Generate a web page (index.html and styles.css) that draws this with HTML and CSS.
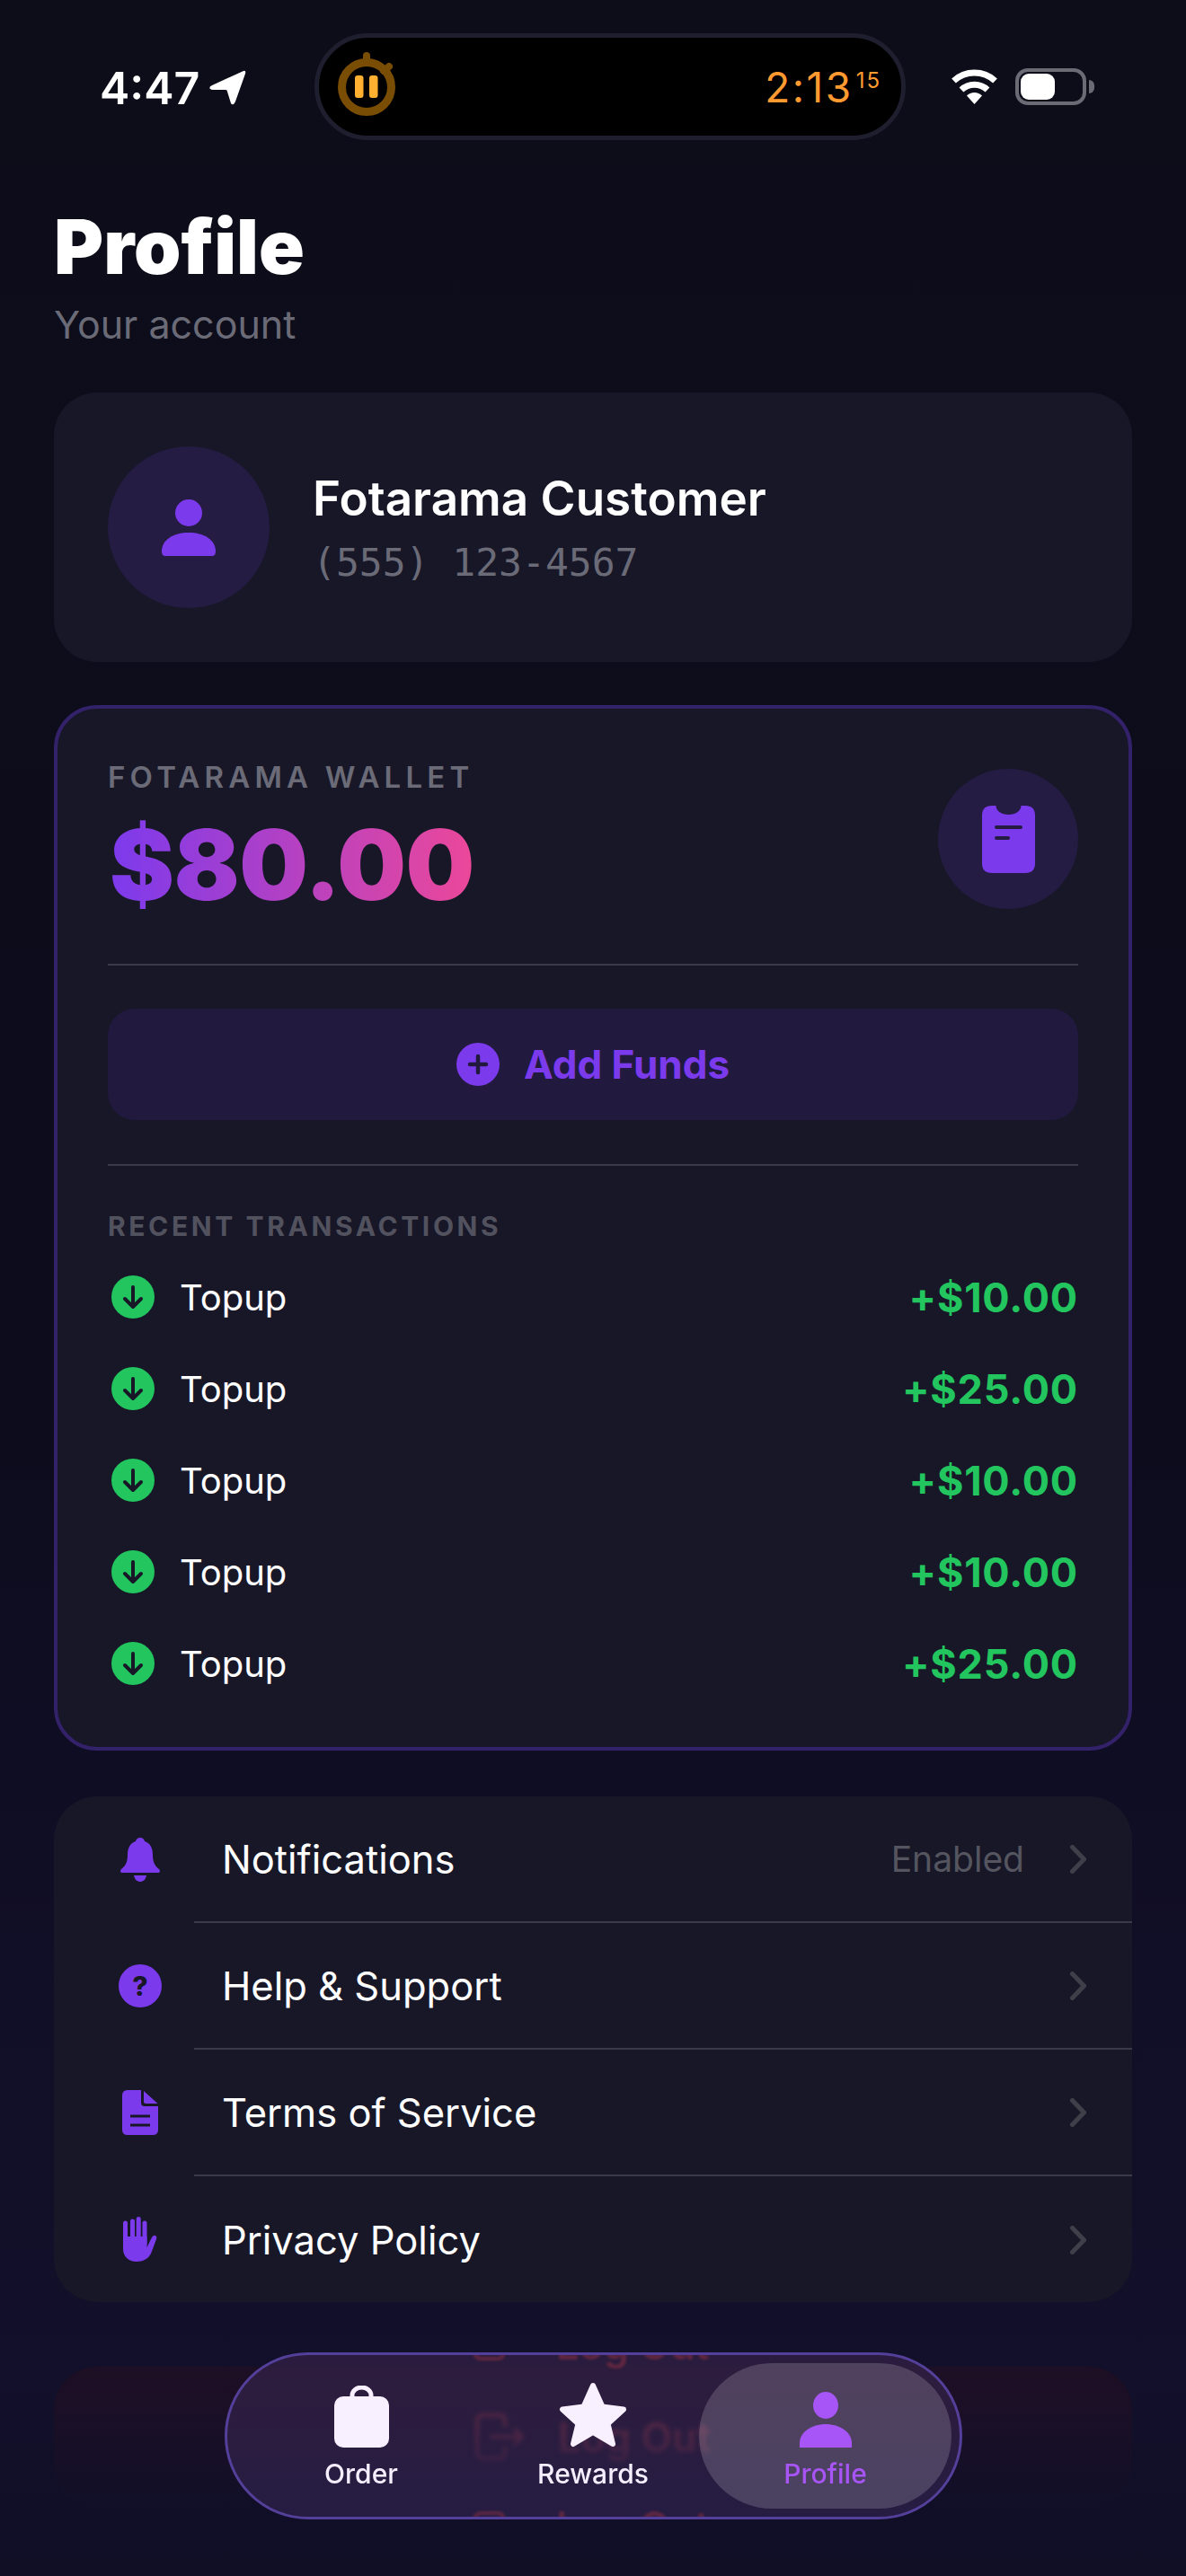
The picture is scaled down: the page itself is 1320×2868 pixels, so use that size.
FILE: index.html
```html
<!DOCTYPE html>
<html lang="en">
<head>
    <meta charset="UTF-8">
    <meta name="viewport" content="width=device-width, initial-scale=1.0">
    <title>Profile</title>
    <link rel="stylesheet" href="styles.css">
</head>
<body>
    <div class="status-bar">
        <div class="status-left">
            <span class="clock">4:47</span>
            <svg class="arrow-icon" viewBox="0 0 41 39"><path d="M38 1 L3 17 Q-1 19 1 21 Q2 22 4 22 L18 22 Q20 22 20 24 L24 37 Q25 39 27 38 Q28 37 29 35 L40 4 Q41 0 38 1Z"/></svg>
        </div>
        <div class="island">
            <svg class="stopwatch" viewBox="0 0 72 82">
                <circle cx="32" cy="41" r="27.5" fill="none" stroke="#7a4d05" stroke-width="9"/>
                <path d="M32 6 V12 M57 18 L51 23" stroke="#7a4d05" stroke-width="8" stroke-linecap="round"/>
                <rect x="19" y="28" width="9.5" height="25" rx="3" fill="#ffb030"/>
                <rect x="35" y="28" width="9.5" height="25" rx="3" fill="#ffb030"/>
            </svg>
            <span class="timer">2:13<sup>15</sup></span>
        </div>
        <div class="status-right">
            <svg class="wifi" viewBox="0 0 53 39">
                <path d="M3.5 13 A 34 34 0 0 1 49.5 13 M12 23 A 21 21 0 0 1 41 23" fill="none" stroke="#fff" stroke-width="7"/>
                <path d="M26.5 39 L18 29.5 A 12 12 0 0 1 35 29.5 Z" fill="#fff"/>
            </svg>
            <div class="battery"><div class="battery-fill"></div></div>
        </div>
    </div>

    <div class="page-head">
        <h1>Profile</h1>
        <p>Your account</p>
    </div>

    <div class="card user-card">
        <div class="avatar">
            <svg class="person" viewBox="0 0 60 63">
                <circle cx="30" cy="15" r="15"/>
                <path d="M0 58 C0 45 13 37 30 37 C47 37 60 45 60 58 Q60 63 56 63 H4 Q0 63 0 58Z"/>
            </svg>
        </div>
        <div class="user-info">
            <div class="user-name">Fotarama Customer</div>
            <div class="user-phone">(555) 123-4567</div>
        </div>
    </div>

    <div class="card wallet">
        <div class="wallet-top">
            <div>
                <div class="wallet-label">FOTARAMA WALLET</div>
                <div class="wallet-amount">$80.00</div>
            </div>
            <div class="wallet-icon">
                <svg viewBox="0 0 59 75">
                    <path d="M11 0 H15.5 C15.5 6 22 10 29.5 10 C37 10 43.5 6 43.5 0 H48 Q59 0 59 11 V64 Q59 75 48 75 H11 Q0 75 0 64 V11 Q0 0 11 0Z" fill="#7c3aed"/>
                    <rect x="14" y="22" width="31" height="4" rx="2" fill="#241c42"/>
                    <rect x="14" y="34" width="17" height="4" rx="2" fill="#241c42"/>
                </svg>
            </div>
        </div>
        <div class="add-funds">
            <svg class="plus" viewBox="0 0 48 48">
                <circle cx="24" cy="24" r="24" fill="#7c3aed"/>
                <path d="M24 15 V33 M15 24 H33" stroke="#211a3e" stroke-width="4.5" stroke-linecap="round"/>
            </svg>
            <span>Add Funds</span>
        </div>
        <div class="tx-title">RECENT TRANSACTIONS</div>
        <div class="tx-list">
            <div class="tx-row">
                <svg class="tx-icon" viewBox="0 0 48 48"><circle cx="24" cy="24" r="24" fill="#22c55e"/><path d="M24 13 V34 M15 26 L24 35 L33 26" fill="none" stroke="#171728" stroke-width="4" stroke-linecap="round" stroke-linejoin="round"/></svg>
                <span class="tx-name">Topup</span>
                <span class="tx-amount">+$10.00</span>
            </div>
            <div class="tx-row">
                <svg class="tx-icon" viewBox="0 0 48 48"><circle cx="24" cy="24" r="24" fill="#22c55e"/><path d="M24 13 V34 M15 26 L24 35 L33 26" fill="none" stroke="#171728" stroke-width="4" stroke-linecap="round" stroke-linejoin="round"/></svg>
                <span class="tx-name">Topup</span>
                <span class="tx-amount">+$25.00</span>
            </div>
            <div class="tx-row">
                <svg class="tx-icon" viewBox="0 0 48 48"><circle cx="24" cy="24" r="24" fill="#22c55e"/><path d="M24 13 V34 M15 26 L24 35 L33 26" fill="none" stroke="#171728" stroke-width="4" stroke-linecap="round" stroke-linejoin="round"/></svg>
                <span class="tx-name">Topup</span>
                <span class="tx-amount">+$10.00</span>
            </div>
            <div class="tx-row">
                <svg class="tx-icon" viewBox="0 0 48 48"><circle cx="24" cy="24" r="24" fill="#22c55e"/><path d="M24 13 V34 M15 26 L24 35 L33 26" fill="none" stroke="#171728" stroke-width="4" stroke-linecap="round" stroke-linejoin="round"/></svg>
                <span class="tx-name">Topup</span>
                <span class="tx-amount">+$10.00</span>
            </div>
            <div class="tx-row">
                <svg class="tx-icon" viewBox="0 0 48 48"><circle cx="24" cy="24" r="24" fill="#22c55e"/><path d="M24 13 V34 M15 26 L24 35 L33 26" fill="none" stroke="#171728" stroke-width="4" stroke-linecap="round" stroke-linejoin="round"/></svg>
                <span class="tx-name">Topup</span>
                <span class="tx-amount">+$25.00</span>
            </div>
        </div>
    </div>

    <div class="card menu">
        <div class="menu-row">
            <div class="menu-icon">
                <svg class="bell" viewBox="0 0 44 49" fill="#7c3aed">
                    <path d="M22 0 C25 0 26.5 2 27 4 C33.5 6 36 12 36 19 C36 27 38 31 43 35 Q45 37 43 39 H1 Q-1 37 1 35 C6 31 8 27 8 19 C8 12 10.5 6 17 4 C17.5 2 19 0 22 0Z"/>
                    <path d="M15 42 H29 C28 47 25 49 22 49 C19 49 16 47 15 42Z"/>
                </svg>
            </div>
            <div class="menu-body">
                <span class="menu-text">Notifications</span>
                <span class="menu-value">Enabled</span>
                <svg class="chevron" viewBox="0 0 18 32"><path d="M2.5 2.5 L15.5 16 L2.5 29.5"/></svg>
            </div>
        </div>
        <div class="menu-row">
            <div class="menu-icon"><span class="help-icon">?</span></div>
            <div class="menu-body">
                <span class="menu-text">Help &amp; Support</span>
                <svg class="chevron" viewBox="0 0 18 32"><path d="M2.5 2.5 L15.5 16 L2.5 29.5"/></svg>
            </div>
        </div>
        <div class="menu-row">
            <div class="menu-icon">
                <svg class="doc" viewBox="0 0 40 50">
                    <path d="M6 0 H21 V14 Q21 18 25 18 H40 V44 Q40 50 34 50 H6 Q0 50 0 44 V6 Q0 0 6 0Z" fill="#7c3aed"/>
                    <path d="M24 1 L39.5 15 H26 Q24 15 24 13Z" fill="#7c3aed"/>
                    <path d="M9 29 H31 M9 39 H31" stroke="#171728" stroke-width="3"/>
                </svg>
            </div>
            <div class="menu-body">
                <span class="menu-text">Terms of Service</span>
                <svg class="chevron" viewBox="0 0 18 32"><path d="M2.5 2.5 L15.5 16 L2.5 29.5"/></svg>
            </div>
        </div>
        <div class="menu-row last">
            <div class="menu-icon">
                <svg class="hand" viewBox="0 0 38 50">
                    <path d="M0 22 H26.5 V34 L32 23 Q34 20 36 21 Q38 22 37 25 L31 41 C28 47 22 50 15 50 C6 50 0 44 0 36Z" fill="#7c3aed"/>
                    <path d="M2.5 30 V7 M10.5 30 V5 M17.2 30 V2.5 M24 30 V7" stroke="#7c3aed" stroke-width="5" stroke-linecap="round"/>
                </svg>
            </div>
            <div class="menu-body">
                <span class="menu-text">Privacy Policy</span>
                <svg class="chevron" viewBox="0 0 18 32"><path d="M2.5 2.5 L15.5 16 L2.5 29.5"/></svg>
            </div>
        </div>
    </div>

    <div class="card logout">
        <svg class="logout-icon" viewBox="0 0 54 52"><path d="M33 14 V8 Q33 2 27 2 H9 Q2 2 2 8 V44 Q2 50 9 50 H27 Q33 50 33 44 V38 M18 26 H52 M44 18 L52 26 L44 34"/></svg>
        <span>Log Out</span>
    </div>

    <div class="bottom-fade"></div>

    <div class="tab-bar">
        <div class="echo echo-top">
            <svg class="logout-icon" viewBox="0 0 54 52"><path d="M33 14 V8 Q33 2 27 2 H9 Q2 2 2 8 V44 Q2 50 9 50 H27 Q33 50 33 44 V38 M18 26 H52 M44 18 L52 26 L44 34"/></svg>
        </div>
        <div class="echo echo-bottom">
            <svg class="logout-icon" viewBox="0 0 54 52"><path d="M33 14 V8 Q33 2 27 2 H9 Q2 2 2 8 V44 Q2 50 9 50 H27 Q33 50 33 44 V38 M18 26 H52 M44 18 L52 26 L44 34"/></svg>
        </div>
        <div class="tab">
            <div class="tab-icon">
                <svg class="bag" viewBox="0 0 61 69">
                    <path d="M20 14 V11 A10.5 9 0 0 1 41 11 V14" fill="none" stroke="#f8f0ff" stroke-width="5"/>
                    <rect y="12" width="61" height="57" rx="10" fill="#f8f0ff"/>
                </svg>
            </div>
            <span>Order</span>
        </div>
        <div class="tab">
            <div class="tab-icon">
                <svg class="star" viewBox="0 0 76 73"><polygon points="38,4 48.5,27.5 72,30.5 54.5,46.5 60,69 38,56 16,69 21.5,46.5 4,30.5 27.5,27.5"/></svg>
            </div>
            <span>Rewards</span>
        </div>
        <div class="tab active">
            <div class="tab-icon">
                <svg class="tab-person" viewBox="0 0 58 62">
                    <ellipse cx="29" cy="15" rx="14" ry="15"/>
                    <path d="M0 62 V57 C0 45 13 36 29 36 C45 36 58 45 58 57 V62Z"/>
                </svg>
            </div>
            <span>Profile</span>
        </div>
    </div>
</body>
</html>
```

FILE: styles.css
```css
* {
    box-sizing: border-box;
}
html, body {
    margin: 0;
    height: 2868px;
    overflow: hidden;
}
body {
    position: relative;
    width: 1320px;
    font-family: 'Inter', sans-serif;
    color: #fff;
    background: linear-gradient(180deg, #0d0d1a 0, #0c0c1c 1500px, #110e27 2200px, #12102a 2650px, #100f26 2868px);
}

/* status bar */
.status-bar {
    display: grid;
    grid-template-columns: 350px 658px 1fr;
    padding-top: 37px;
    height: 156px;
}
.status-left {
    display: flex;
    align-items: center;
    padding: 2px 0 0 111px;
    gap: 11px;
}
.clock {
    font-size: 50px;
    font-weight: 600;
}
.arrow-icon {
    width: 41px;
    height: 39px;
    fill: #fff;
}
.island {
    display: flex;
    align-items: center;
    justify-content: space-between;
    background: #000;
    border: 5px solid #1e1e2e;
    border-radius: 60px;
    padding: 0 22px 0 21px;
}
.stopwatch {
    width: 72px;
    height: 82px;
}
.timer {
    color: #ff9a30;
    font-size: 46px;
    letter-spacing: 2.5px;
    line-height: 1;
}
.timer sup {
    font-size: 24px;
    letter-spacing: 2px;
    line-height: 1;
    vertical-align: 16px;
    margin-left: 3px;
}
.status-right {
    display: flex;
    align-items: center;
    padding-left: 50px;
    gap: 19px;
}
.wifi {
    width: 53px;
    height: 39px;
}
.battery {
    position: relative;
    width: 79px;
    height: 41px;
    border: 4px solid #6b6b76;
    border-radius: 14px;
    padding: 2px;
}
.battery-fill {
    width: 38px;
    height: 100%;
    background: #fff;
    border-radius: 9px;
}
.battery::after {
    content: "";
    position: absolute;
    right: -13px;
    top: 9px;
    width: 6px;
    height: 15px;
    background: #6b6b76;
    border-radius: 0 6px 6px 0;
}

/* heading */
.page-head {
    padding: 0 60px;
    margin-top: 69px;
}
.page-head h1 {
    margin: 0;
    font-size: 84px;
    font-weight: 900;
    line-height: 100px;
}
.page-head p {
    margin: 9px 0 0;
    font-size: 43px;
    line-height: 54px;
    color: #6b6b78;
}

.card {
    margin: 0 60px;
    background: #171728;
    border-radius: 48px;
}

/* user */
.user-card {
    display: flex;
    align-items: center;
    gap: 48px;
    height: 300px;
    margin-top: 49px;
    padding: 0 60px;
}
.avatar {
    display: flex;
    align-items: center;
    justify-content: center;
    width: 180px;
    height: 180px;
    border-radius: 50%;
    background: #241c42;
}
.person {
    width: 60px;
    height: 63px;
    fill: #7c3aed;
}
.user-info {
    padding-top: 2px;
}
.user-name {
    font-size: 53px;
    font-weight: 600;
    line-height: 60px;
}
.user-phone {
    font-family: 'DejaVu Sans Mono', monospace;
    font-size: 43px;
    line-height: 50px;
    margin-top: 16px;
    color: #6b6b78;
}

/* wallet */
.wallet {
    height: 1164px;
    margin-top: 48px;
    padding: 56px 56px 0;
    border: 4px solid #33216a;
}
.wallet-top {
    display: flex;
    align-items: center;
    justify-content: space-between;
    height: 230px;
    padding-bottom: 50px;
    border-bottom: 2px solid #3a3a48;
}
.wallet-label {
    font-size: 33px;
    font-weight: 600;
    letter-spacing: 5.2px;
    line-height: 40px;
    color: #6b6b78;
}
.wallet-amount {
    display: inline-block;
    margin: 18px 0 0 2px;
    font-size: 108px;
    font-weight: 900;
    letter-spacing: -0.5px;
    line-height: 120px;
    background: linear-gradient(90deg, #7c3aed, #ec4899);
    -webkit-background-clip: text;
    background-clip: text;
    color: transparent;
}
.wallet-icon {
    display: flex;
    align-items: center;
    justify-content: center;
    width: 156px;
    height: 156px;
    border-radius: 50%;
    background: #241c42;
}
.wallet-icon svg {
    width: 59px;
    height: 75px;
}
.add-funds {
    display: flex;
    align-items: center;
    justify-content: center;
    gap: 27px;
    height: 124px;
    margin-top: 48px;
    background: #211a3e;
    border-radius: 30px;
    color: #7c3aed;
    font-size: 44px;
    font-weight: 700;
}
.plus {
    width: 48px;
    height: 48px;
}
.tx-title {
    margin-top: 49px;
    padding-top: 49px;
    border-top: 2px solid #3a3a48;
    font-size: 30px;
    font-weight: 700;
    letter-spacing: 3.6px;
    line-height: 36px;
    color: #52525f;
}
.tx-list {
    margin-top: 10px;
}
.tx-row {
    display: flex;
    align-items: center;
    height: 102px;
}
.tx-icon {
    width: 48px;
    height: 48px;
    margin-left: 4px;
    margin-right: 28px;
}
.tx-name {
    flex: 1;
    font-size: 40px;
}
.tx-amount {
    font-size: 45px;
    font-weight: 700;
    letter-spacing: 0.8px;
    color: #22c55e;
}

/* menu */
.menu {
    margin-top: 51px;
    height: 563px;
    overflow: hidden;
}
.menu-row {
    display: flex;
    height: 141px;
}
.menu-icon {
    display: flex;
    align-items: center;
    justify-content: center;
    flex: none;
    width: 156px;
    height: 140px;
    padding-left: 36px;
}
.menu-body {
    flex: 1;
    display: flex;
    align-items: center;
    border-bottom: 2px solid #3a3a48;
    padding: 0 51px 0 31px;
}
.last .menu-body {
    border-bottom: 0;
}
.menu-text {
    flex: 1;
    font-size: 43.5px;
}
.menu-value {
    font-size: 39px;
    color: #55555f;
    margin-right: 51px;
}
.chevron {
    width: 18px;
    height: 32px;
    fill: none;
    stroke: #3f3f4a;
    stroke-width: 5;
    stroke-linecap: round;
    stroke-linejoin: round;
}
.bell {
    width: 44px;
    height: 49px;
}
.help-icon {
    display: flex;
    align-items: center;
    justify-content: center;
    width: 48px;
    height: 48px;
    border-radius: 50%;
    background: #7c3aed;
    color: #171728;
    font-size: 30px;
    font-weight: 800;
}
.doc {
    width: 40px;
    height: 50px;
}
.hand {
    width: 38px;
    height: 50px;
}

/* log out, mostly under the tab bar */
.logout {
    display: flex;
    align-items: center;
    justify-content: center;
    gap: 38px;
    height: 156px;
    margin-top: 72px;
    background: #1e0f24;
    color: #ef4444;
    font-size: 45px;
    font-weight: 600;
}
.logout-icon {
    width: 54px;
    height: 52px;
    fill: none;
    stroke: #ef4444;
    stroke-width: 4;
    stroke-linecap: round;
    stroke-linejoin: round;
}
.bottom-fade {
    position: absolute;
    left: 0;
    right: 0;
    top: 2620px;
    bottom: 0;
    background: linear-gradient(180deg, rgba(18, 16, 42, 0), rgba(18, 16, 42, 0.45) 90px, #110f28 170px, #100f26);
}

/* tab bar */
.tab-bar {
    position: absolute;
    left: 250px;
    top: 2619px;
    display: grid;
    grid-template-columns: 280px 236px 1fr;
    width: 821px;
    height: 186px;
    padding: 9px;
    overflow: hidden;
    border: 3px solid #54409a;
    border-radius: 93px;
    background: linear-gradient(180deg, rgba(53, 34, 71, 0.7), rgba(47, 35, 78, 0.7));
    backdrop-filter: blur(2.5px);
}
.tab {
    position: relative;
    display: flex;
    flex-direction: column;
    align-items: center;
    padding-top: 20px;
    border-radius: 81px;
    font-size: 30px;
    font-weight: 500;
    color: #f5eeff;
}
.tab-icon {
    display: flex;
    align-items: flex-end;
    height: 74px;
    margin-bottom: 11px;
}
.tab.active {
    background: rgba(255, 255, 255, 0.17);
    color: #a855f7;
}
.bag {
    width: 61px;
    height: 69px;
}
.star {
    width: 76px;
    height: 73px;
    fill: #f8f0ff;
    stroke: #f8f0ff;
    stroke-width: 6;
    stroke-linejoin: round;
}
.tab-person {
    width: 58px;
    height: 62px;
    fill: #a855f7;
}

/* the glass edge picks up the log out row again, top and bottom */
.echo {
    position: absolute;
    left: 274px;
    display: flex;
    gap: 38px;
    height: 52px;
    color: #ef4444;
    font-size: 45px;
    font-weight: 600;
    line-height: 34px;
    opacity: 0.28;
    filter: blur(1.5px);
}
.echo::after {
    content: "Log Out";
}
.echo-top {
    top: -46px;
    align-items: flex-end;
}
.echo-bottom {
    bottom: -46px;
    align-items: flex-start;
}
```
